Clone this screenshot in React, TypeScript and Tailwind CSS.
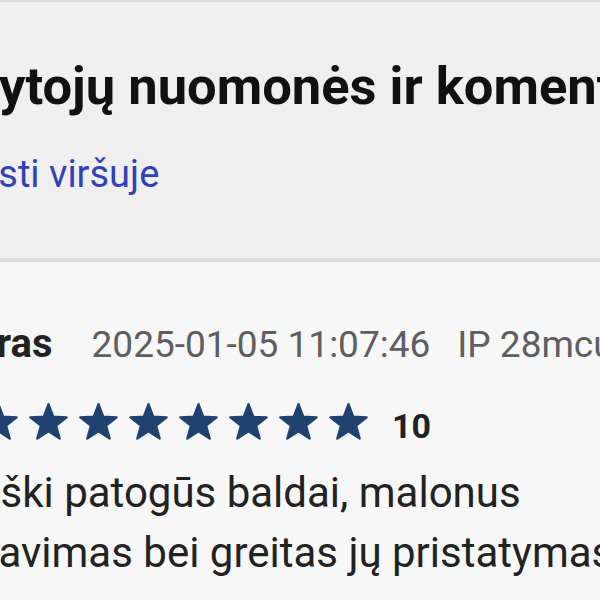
import React from "react";

function Star() {
  return (
    <svg
      viewBox="-51 -53 102 97"
      className="h-[37px] w-[39px] shrink-0 text-[#1f4270]"
      fill="currentColor"
      stroke="currentColor"
      strokeWidth={6}
      strokeLinejoin="round"
    >
      <polygon points="0,-50 12.34,-16.99 47.55,-15.45 19.97,6.49 29.39,40.45 0,21 -29.39,40.45 -19.97,6.49 -47.55,-15.45 -12.34,-16.99" />
    </svg>
  );
}

export default function App() {
  const stars = Array.from({ length: 10 });

  return (
    <div className="h-[600px] w-[600px] overflow-hidden bg-[#f7f7f7] font-['Roboto',sans-serif]">
      {/* Section header */}
      <section className="h-[262px] border-t-2 border-b-4 border-[#dcdcdc] bg-[#efefef] pt-[54px]">
        <h2 className="-ml-[115px] whitespace-nowrap text-[52.5px] font-bold leading-[60px] text-[#111]">
          Lankytojų nuomonės ir komentarai
        </h2>
        <a className="-ml-[70px] mt-[34px] block whitespace-nowrap text-[38px] leading-[48px] text-[#3042b5]">
          Išvesti viršuje
        </a>
      </section>

      {/* Review */}
      <article className="pt-[58px]">
        <div className="-ml-[148px] flex items-baseline whitespace-nowrap leading-[48px]">
          <span className="text-[40px] font-bold text-[#222]">Kazimieras</span>
          <span className="ml-[39px] text-[37px] text-[#5e5e5e]">2025-01-05 11:07:46</span>
          <span className="ml-[27px] text-[37px] text-[#5e5e5e]">IP 28mcu7k2x</span>
        </div>

        <div className="-ml-[121px] mt-[34px] flex items-start">
          <div className="flex gap-[11px]">
            {stars.map((_, i) => (
              <Star key={i} />
            ))}
          </div>
          <span className="ml-[24px] mt-[6px] text-[34px] font-bold leading-none text-[#222]">10</span>
        </div>

        <p className="-ml-[122px] mt-[20px] whitespace-nowrap text-[42px] leading-[60px] text-[#222]">
          Lietuviški patogūs baldai, malonus
          <br />
          aptarnavimas bei greitas jų pristatymas.
        </p>
      </article>
    </div>
  );
}
